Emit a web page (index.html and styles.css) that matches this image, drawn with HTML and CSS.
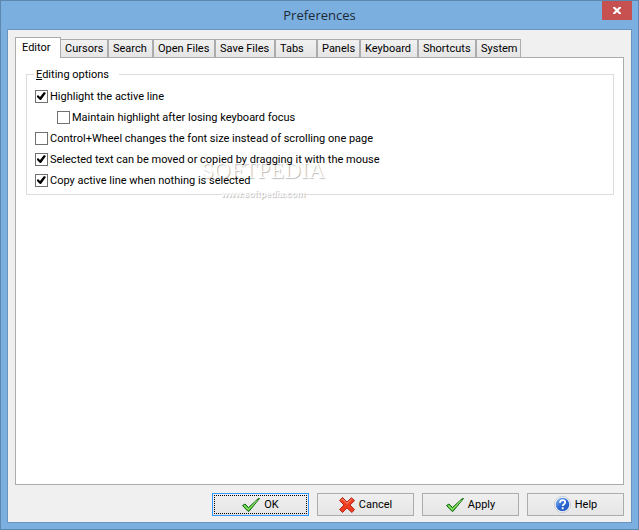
FILE: index.html
```html
<!doctype html>
<html lang="en">
  <head>
    <meta charset="utf-8">
    <title>Preferences</title>
    <link rel="stylesheet" href="styles.css">
  </head>
  <body>
    <div class="window">
      <header class="titlebar">
        <h1>Preferences</h1>
        <button type="button" class="close" aria-label="Close">
          <svg width="8" height="7" viewBox="0 0 8 7"><path d="M0 0h2l2 2 2-2h2v1L5.500 3.500 8 6v1H6L4 5 2 7H0V6l2.500-2.500L0 1z" fill="#fff"/></svg>
        </button>
      </header>

      <form class="client">
        <nav class="tabs" role="tablist">
          <button type="button" role="tab" class="tab active" aria-selected="true">Editor</button>
          <button type="button" role="tab" class="tab">Cursors</button>
          <button type="button" role="tab" class="tab">Search</button>
          <button type="button" role="tab" class="tab">Open Files</button>
          <button type="button" role="tab" class="tab">Save Files</button>
          <button type="button" role="tab" class="tab">Tabs</button>
          <button type="button" role="tab" class="tab">Panels</button>
          <button type="button" role="tab" class="tab">Keyboard</button>
          <button type="button" role="tab" class="tab">Shortcuts</button>
          <button type="button" role="tab" class="tab">System</button>
        </nav>

        <section class="panel" role="tabpanel">
          <fieldset class="group">
            <legend><u>E</u>diting options</legend>
            <div class="option">
              <input type="checkbox" id="highlight" checked>
              <label for="highlight">Highlight the active line</label>
            </div>
            <div class="option indent">
              <input type="checkbox" id="maintain">
              <label for="maintain">Maintain highlight after losing keyboard focus</label>
            </div>
            <div class="option">
              <input type="checkbox" id="wheel">
              <label for="wheel">Control+Wheel changes the font size instead of scrolling one page</label>
            </div>
            <div class="option">
              <input type="checkbox" id="drag" checked>
              <label for="drag">Selected text can be moved or copied by dragging it with the mouse</label>
            </div>
            <div class="option">
              <input type="checkbox" id="copy" checked>
              <label for="copy">Copy active line when nothing is selected</label>
            </div>
            <div class="watermark">
              <span class="brand">SOFTPEDIA</span>
              <span class="site">www.softpedia.com</span>
            </div>
          </fieldset>
        </section>

        <footer class="buttons">
          <button type="button" class="button default">
            <svg width="18" height="14" viewBox="0 0 18 14"><path d="M.5 7.500 3 6l3.500 3.500L16 .8l1.500-.3L7 13.300H6z" fill="#4fc52f" stroke="#17671a"/><path d="M2 7.500l4.500 4L15 2.500" fill="none" stroke="#a4ed7c"/></svg>
            OK
          </button>
          <button type="button" class="button">
            <svg width="16" height="16" viewBox="0 0 16 16"><path d="M3.500.5 8 5 12.500.7l3 3L11 8l4.500 4.500-2.500 3L8 11l-4.500 4.500-3-3L5 8 .5 3.500z" fill="#ef3d20" stroke="#b3261a"/><path d="M2 3.500l1.500-1.500L8 6.500 12.500 2.200" fill="none" stroke="#ff9c7d"/></svg>
            Cancel
          </button>
          <button type="button" class="button">
            <svg width="18" height="14" viewBox="0 0 18 14"><path d="M.5 7.500 3 6l3.500 3.500L16 .8l1.500-.3L7 13.300H6z" fill="#4fc52f" stroke="#17671a"/><path d="M2 7.500l4.500 4L15 2.500" fill="none" stroke="#a4ed7c"/></svg>
            Apply
          </button>
          <button type="button" class="button">
            <svg width="17" height="17" viewBox="0 0 17 17">
              <defs><linearGradient id="ball" x1="0" y1="0" x2="1" y2="1"><stop offset="0" stop-color="#8dbcf5"/><stop offset=".5" stop-color="#2b67d2"/><stop offset="1" stop-color="#2456b8"/></linearGradient></defs>
              <circle cx="8.500" cy="8.500" r="8" fill="#fff" stroke="#c3c8d2"/><circle cx="8.500" cy="8.500" r="6.800" fill="url(#ball)"/>
              <path d="M6 6.800c0-3.600 5.200-3.200 5.200-.4 0 1.800-2.500 1.800-2.500 3.600M8.700 11.300v1.900" fill="none" stroke="#fff" stroke-width="1.800"/>
            </svg>
            Help
          </button>
        </footer>
      </form>
    </div>
  </body>
</html>
```
FILE: styles.css
```css
* {
  box-sizing: border-box;
}

body {
  margin: 0;
  font: 11px/15px Roboto, Tahoma, sans-serif;
  color: #000;
}

button {
  margin: 0;
  padding: 0;
  font: inherit;
  color: inherit;
}

.window {
  display: flex;
  flex-direction: column;
  min-height: 100vh;
  padding: 0 6px 6px;
  background: #7aafdf;
  border: 1px solid #5b87b0;
}

/* title bar */
.titlebar {
  display: flex;
  align-items: flex-start;
  height: 28px;
}

.titlebar h1 {
  flex: 1;
  margin: 0;
  padding-left: 30px;
  font: 13px/28px "Open Sans", "Segoe UI", sans-serif;
  text-align: center;
  color: #1c2a38;
}

.close {
  display: flex;
  align-items: center;
  justify-content: center;
  width: 30px;
  height: 19px;
  background: #c75050;
  border: 0;
}

/* dialog body */
.client {
  display: flex;
  flex: 1;
  flex-direction: column;
  padding: 7px 7px 6px;
  background: #f0f0f0;
  border: 1px solid #6994bd;
}

.tabs {
  display: grid;
  grid-template-columns: 46px 47px 45px 62px 60px 42px 43px 58px 58px 45px;
  align-items: end;
  height: 21px;
  margin-bottom: -1px;
}

.tab {
  height: 19px;
  padding-left: 4px;
  text-align: left;
  white-space: nowrap;
  background: linear-gradient(#f1f1f1, #e5e5e5);
  border: 1px solid #acacac;
}

.tab.active {
  z-index: 1;
  height: 21px;
  padding: 0 0 1px 6px;
  background: #fff;
  border-bottom: 0;
}

.tab.active + .tab {
  border-left: 0;
}

.panel {
  flex: 1;
  padding: 9px 9px 10px 10px;
  background: #fff;
  border: 1px solid #acacac;
}

.group {
  position: relative;
  margin: 0;
  padding: 4px 8px 3px;
  border: 1px solid #dcdcdc;
}

.group legend {
  margin-left: -1px;
  padding: 0 10px 0 2px;
}

.option {
  position: relative;
  z-index: 1;
  display: flex;
  align-items: center;
  gap: 2px;
  height: 21px;
}

.option.indent {
  padding-left: 22px;
}

.option input {
  width: 13px;
  height: 13px;
  margin: 0;
  appearance: none;
  background: #fff;
  border: 1px solid #707070;
}

.option input:checked::before {
  display: block;
  height: 11px;
  content: "";
  background: #000;
  clip-path: polygon(1px 5px, 2px 4px, 4px 6px, 8px 1px, 10px 2px, 5px 9px, 4px 9px, 1px 6px);
}

.watermark {
  position: absolute;
  top: 77px;
  left: 174px;
  display: grid;
  gap: 4px;
  justify-items: center;
  color: #fff;
  text-shadow: 1px 1px 1px #bbb;
  pointer-events: none;
}

.brand {
  font: 23px/24px "Liberation Serif", serif;
}

.site {
  font: bold 9px/14px "Liberation Sans", sans-serif;
}

/* bottom row */
.buttons {
  display: flex;
  justify-content: flex-end;
  gap: 8px;
  margin-top: 8px;
}

.button {
  display: flex;
  align-items: center;
  justify-content: center;
  gap: 4px;
  width: 97px;
  height: 23px;
  background: linear-gradient(#f0f0f0, #e5e5e5);
  border: 1px solid #acacac;
}

.button.default {
  border-color: #3399ff;
  outline: 1px dotted #000;
  outline-offset: -3px;
}
```
